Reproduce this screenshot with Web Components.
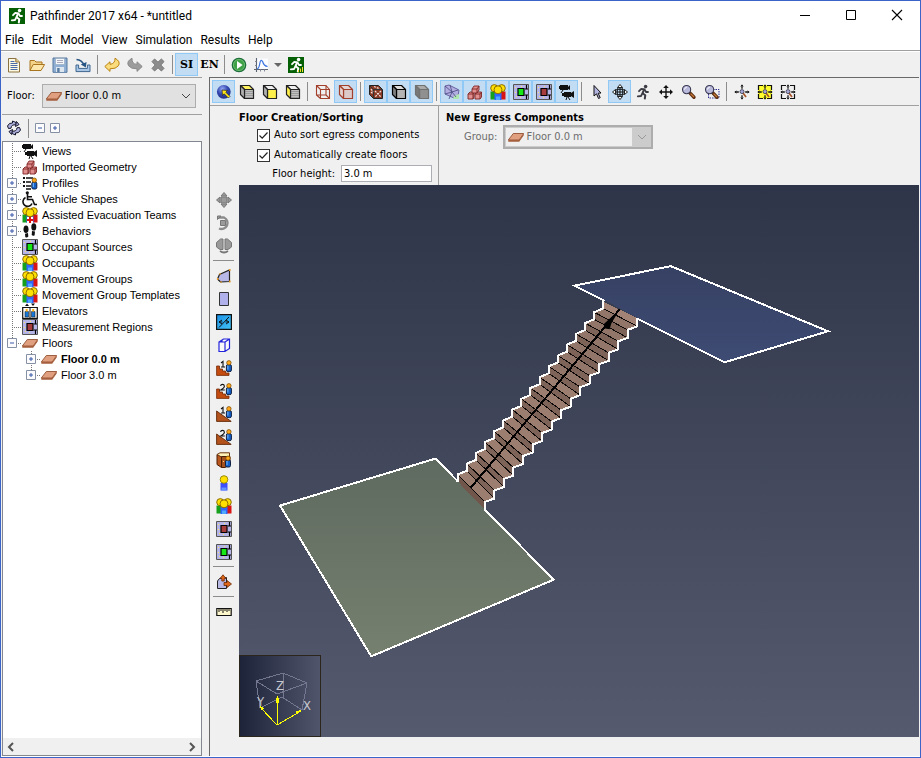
<!DOCTYPE html>
<html lang="en">
<head>
<meta charset="utf-8">
<title>Pathfinder 2017 x64 - *untitled</title>
<style>
html, body { margin: 0; height: 100%; }
body { font: 11px/16px "DejaVu Sans Condensed", "DejaVu Sans", sans-serif; color: #000; background: #fff; }
</style>
</head>
<body>
<pf-window></pf-window>

<script>
/* ---------- icon artwork, each on a 16 x 16 grid ---------- */
const runner = c => `<g fill="none" stroke="${c}" stroke-width="1.8" stroke-linejoin="round" stroke-linecap="round"><path d="M4 7.2L6.3 4.8L9.5 5.4L11 8H13"/><path d="M9 5.6L7.6 9.2L10.3 11.2L9.8 14.5" stroke-width="2"/><path d="M7.4 9.4L6 12L2.8 12.4"/></g><circle cx="10.6" cy="2.6" r="1.8" fill="${c}"/>`;
const small = (x, y) => `<rect x="${x}" y="${y + 4}" width="5" height="7" rx="1.5" fill="#1560c8" stroke="#102040"/><path d="M${x + 1.5} ${y + 5}v4" stroke="#7ac0ff"/><circle cx="${x + 2.5}" cy="${y + 2.2}" r="2.2" fill="#ffa818" stroke="#704000" stroke-width=".7"/>`;
const crowd = `<path d="M.5 7.500h4.500v8H.5z" fill="#16a01c"/><path d="M11 7.500h4.500v8H11z" fill="#d81414"/><path d="M4.500 9h7v7h-7z" fill="#2f66ff"/><path d="M6 12.500h4V16H6z" fill="#50a8ff"/><g fill="#ffe000" stroke="#806000" stroke-width=".9"><circle cx="4.300" cy="4.200" r="3.600"/><circle cx="11.700" cy="4.200" r="3.600"/><circle cx="8" cy="5.800" r="4"/></g>`;
const source = c => `<path d="M.5.5h15v15H.5z" fill="#b4b4e6" stroke="#555"/><path d="M5 4.500h6v7H5z" fill="${c}" stroke="#000" stroke-width="1.2"/><path d="M13.5 1v4M12 5h3M13.5 15v-4M12 11h3" stroke="#000" stroke-width="1.2"/><path d="M2 3h1v1H2zM2 8h1v1H2zM3 12h1v1H3zM7 13h1v1H7zM8 2h1v1H8z" fill="#ffe860"/>`;
const slab = `<path d="M.3 11L5.3 4.5H15.7L11.2 11z" fill="#e0a080" stroke="#935334" stroke-width=".9"/><path d="M.3 11V12.800H11.2L15.700 6.400V4.500L11.2 11z" fill="#a65f3c"/>`;
const hatch = `<path d="M6.500 7.500h7M6.500 9.500h7M6.500 11.500h7M6.500 13.500h7" stroke="#777" stroke-dasharray="1 1" stroke-width="1"/>`;
const box = (top, front, side, s = '#222', over = '') => `<g stroke="${s}" stroke-width="1.2" stroke-linejoin="round"><path d="M1.500 1.500H10.500L14.500 5.500H5.500z" fill="${top}"/><path d="M5.5 5.500H14.500V14.5H5.5z" fill="${front}"/><path d="M1.500 1.500L5.5 5.500V14.5L1.500 10.500z" fill="${side}"/></g>${over}`;
const cameras = `<g><path d="M1 1h8v5H1zM9 3l2-2v5L9 5zM0 2h2v3H0zM5 8h7v5H5zM12 9l3-2v7l-3-2zM3 9h3v3H3z" fill="#111"/><path d="M4 6l-2 3M8 13l-1 3M9 13l2 3" stroke="#111" fill="none"/></g>`;
const lens = `<path d="M8.6 8.6L13 13.2" stroke="#5b2e12" stroke-width="3.4" stroke-linecap="round"/><path d="M9.6 9.6L13 13" stroke="#c87838" stroke-width="1.3"/><circle cx="5.6" cy="5.6" r="4.1" fill="#b9b9dc" stroke="#383850" stroke-width="1.1"/><path d="M3.5 5.5q.3-2 2.3-2.3" stroke="#fff" fill="none"/>`;
const fit = `<path d="M8 .8v4M8 11.2v4M.8 8h4M11.2 8h4" stroke="#111" stroke-width="1.3"/><path d="M6.8 2.4L8 1l1.2 1.4M6.8 13.6L8 15l1.2-1.4M2.4 6.8L1 8l1.4 1.2M13.6 6.8L15 8l-1.4 1.2" fill="none" stroke="#111" stroke-width=".8"/><path d="M9 9L12 13" stroke="#a8542a" stroke-width="1.7"/><circle cx="8" cy="7.6" r="2" fill="#a8a8d8" stroke="#334" stroke-width=".8"/>`;
const corners = `<path d="M6 1.500H1.500V6M10 1.500H14.500V6M14.500 10V14.500H10M6 14.500H1.500V10" fill="none" stroke="#111" stroke-width="1.2"/>`;
const move = c => `<path d="M8 2v12M2 8h12" stroke="${c}" stroke-width="1.4"/><path d="M5.2 4L8 1l2.8 3zM5.2 12L8 15l2.8-3zM4 5.2L1 8l3 2.8zM12 5.2L15 8l-3 2.8z" fill="${c}"/>`;
const digit = n => n === 1 ? `<path d="M5 3L7 1.4V7M5 7h4" fill="none" stroke="#111" stroke-width="1.1"/>` : `<path d="M4.6 3Q4.8 1.4 6.5 1.4T8.4 3.2Q8.4 4.6 4.8 7H8.8" fill="none" stroke="#111" stroke-width="1.1"/>`;
const stair = n => `<path d="M.6 6V15.4H13V13H9.500V11H6.500V9H3.500V6z" fill="#c44c10" stroke="#732a06" stroke-width=".8"/>` + digit(n) + small(10.4, .6);
const ramp = n => `<path d="M.6 5V15.4H15.2z" fill="#b4521c" stroke="#602808" stroke-width=".9"/>` + digit(n) + small(10.4, .6);

const ICONS = {
  app: `<path d="M0 0h16v16H0z" fill="#055f05"/>` + runner('#fff'),
  results: `<path d="M0 0h16v16H0z" fill="#055f05"/>` + runner('#fff') + `<path d="M10.5 15v-2M12.5 15v-3.4M14.5 15v-5" stroke="#f4dc28" stroke-width="1"/>`,
  new: `<path d="M2.5 1.5H9.8L13.5 5V15H2.5z" fill="#fff8e0" stroke="#8a7340"/><path d="M9.8 1.5V5h3.7" fill="#e9cf8c" stroke="#8a7340"/><path d="M4.5 4.5h4M4.5 6.5h7M4.5 8.5h7M4.5 10.5h7M4.5 12.5h7" stroke="#4a6ca8"/>`,
  open: `<path d="M1 13.5V3.5h4.5L7 5h6v3" fill="#f3d38a" stroke="#a9741e"/><path d="M1 13.5L4.2 7.5H15.6L12 13.5z" fill="#fde6ac" stroke="#a9741e" stroke-linejoin="round"/>`,
  save: `<path d="M1 1h14v14.3H1z" fill="#8fb0d4" stroke="#56799f"/><path d="M3.5 1.5h9v6h-9z" fill="#f4f7fa" stroke="#90a5bb" stroke-width=".6"/><path d="M5 3.5h6M5 5.5h6" stroke="#aab"/><path d="M4 10h8v5H4z" fill="#dde5ee"/><path d="M5.2 11h2.4v4H5.2z" fill="#567a9f"/>`,
  import: `<path d="M1 8V14.6H15V8H12.4V11.4H3.6V8z" fill="#a9c6e6" stroke="#3e668f" stroke-width="1"/><path d="M1.5 2.5Q7 3 9.2 8.4" fill="none" stroke="#285684" stroke-width="1.6"/><path d="M5.8 7.6L10.8 10.4L11.6 5z" fill="#285684"/>`,
  undo: `<path d="M.8 9.5L6 4.800V7.400Q11.400 6.500 11 1.200Q17 4.600 14.400 8.800Q12 12 6 11.800V14.400z" fill="#fbdc7c" stroke="#b98314" stroke-linejoin="round"/>`,
  redo: `<path d="M15.2 9.5L10 4.8V7.4Q4.6 7 5 1.2Q-1 4.6 1.6 8.8Q4 12 10 11.8V14.4z" fill="#9c9c9c" stroke="#8a8a8a" stroke-linejoin="round"/>`,
  delete: `<path d="M2 4.6L4.6 2L8 5.2L11.4 2L14 4.6L10.8 8L14 11.4L11.4 14L8 10.8L4.6 14L2 11.4L5.2 8z" fill="#8c8c8c" stroke="#777"/>`,
  run: `<circle cx="8" cy="8" r="6.7" fill="#3fa146" stroke="#1d6d3c" stroke-width="1.3"/><circle cx="8" cy="8" r="5.6" fill="none" stroke="#8ad08a" stroke-width=".6"/><path d="M6 4L11.6 8L6 12z" fill="#fff"/>`,
  chart: `<path d="M3.5 1.5H15V12.5H3.5z" fill="#fafcff"/><path d="M3.5 1V15M1 12.5H15" stroke="#5b6470" stroke-width="1.1"/><path d="M2 4.5h1.5M2 8.500h1.500M7.500 12.500v2M11.500 12.500v2" stroke="#889"/><path d="M4 12Q6 11.500 6.800 6.500T9.600 4.500Q10.800 9 14.600 9.500" fill="none" stroke="#3c74e0" stroke-width="1.2"/>`,
  caret: `<path d="M4 6h8L8 10z" fill="#666"/>`,
  refresh: `<g fill="#aeb0dc" stroke="#15152c" stroke-width="1"><path d="M6.500 1L10 2.500V5Q5.500 4 5 8.200L2.500 8.500L1.500 6Q3 2.500 6.500 3z"/><path d="M9.500 15L6 13.500V11Q10.500 12 11 7.800L13.500 7.500L14.500 10Q13 13.500 9.500 13z"/><path d="M10.500 1.500L13 4.500L9.500 6.500zM5.500 14.500L3 11.500L6.500 9.500z"/></g>`,
  sphere: `<defs><radialGradient id="g" cx=".4" cy=".3" r=".75"><stop offset="0" stop-color="#95a8f4"/><stop offset=".5" stop-color="#3448b0"/><stop offset="1" stop-color="#1d2b80"/></radialGradient></defs><circle cx="7.800" cy="7.800" r="6.900" fill="url(#g)"/><path d="M6 6L11.500 6.500L9.800 8.200L14 12.400L12.400 14L8.200 9.800L6.500 11.500z" fill="#ffe818" stroke="#222" stroke-width=".7"/>`,
  boxTop: box('#fff060', '#c0c0c0', '#b0b0b0', '#222', hatch), boxFront: box('#eee', '#fff04c', '#b0b0b0'), boxSide: box('#eee', '#c0c0c0', '#fff04c', '#222', hatch),
  wire: `<g fill="none" stroke="#a3402c" stroke-width="1.1"><path d="M1.500 1.500H11V11H1.500zM5.500 5.500H14.500V14.500H5.500zM1.500 1.500L5.500 5.500M11 1.500L14.500 5.500M1.500 11L5.500 14.500M11 11L14.500 14.500"/></g>`,
  wireSolid: box('#e4d4d4', '#dccaca', '#e4d4d4', '#a3402c'),
  textured: `<path d="M1.500 1.500H10.500L14.500 5.500V14.500H5.500L1.500 10.500z" fill="#8a3826" stroke="#222"/><path d="M5.500 5.500H14M5.500 5.500V14.500M1.500 1.500L5.500 5.500" stroke="#333"/><path d="M7 7l6 6M13 7l-6 6M3 5l2 3M6 2.500l5 2M3 8l2 2" stroke="#f0e0d8" stroke-width="1.300" stroke-dasharray="2 1"/>`,
  solidEdge: box('#ddd', '#b4b4b4', '#808080', '#000'), solid: box('#aaa', '#909090', '#787878', '#707070'),
  navmesh: `<path d="M1 2L5 1L15 6L14 12L10 14L1 10z" fill="#b2aee2" stroke="#6864a0"/><path d="M10 12L15 10V15H9z" fill="#aee8ae"/><path d="M1 2L8 8L14 6M8 8L5 15M8 8L1 10M8 8L12 13M6 1L8 8" stroke="#46467c" fill="none" stroke-width=".8"/>`,
  geometry: `<g fill="#e28f8f" stroke="#7e2424" stroke-width=".9"><path d="M1 10l2-2h4v5l-1 2H1zM1 10h5v5M6 10l1-2"/><path d="M8 10l2-2h4.500v5L13 15H8zM8 10h5v5M13 10l1.500-2"/><path d="M5 5l2-3h5v4l-2 3H5zM5 5h5v4M10 5l2-3"/></g>`,
  crowd, cameras, slab,
  source: source('#16e816'), region: source('#a63c3c'),
  pointer: `<path d="M5 1.500V12L7.500 9.800L9.500 14.500L11.200 13.700L9.200 9.200L12 9z" fill="#b4b4e0" stroke="#111"/>`,
  orbit: `<path d="M8 3v10M3 8h10" stroke="#111"/><ellipse cx="8" cy="8" rx="6" ry="2.800" fill="none" stroke="#111"/><ellipse cx="8" cy="8" rx="2.800" ry="6" fill="none" stroke="#111"/><path d="M5.500 3.500L8 .500l2.500 3zM5.500 12.500L8 15.500l2.500-3zM3.500 5.500L.500 8l3 2.500zM12.500 5.500L15.500 8l-3 2.500z" fill="#fff" stroke="#111" stroke-width=".9"/>`,
  walk: runner('#3c3c44'), pan: move('#111'),
  zoom: lens, zoomBox: `<path d="M6.500 5.500H15V14H4.500V7" fill="none" stroke="#2c2c90" stroke-dasharray="1.500 1"/>` + lens,
  fitAll: fit, fitSel: `<path d="M1 1h14v14H1z" fill="#ffff30"/>` + corners + fit, fitFloor: corners + fit,
  moveTool: `<g stroke="#777" fill="#9a9a9a"><path d="M5 5h6v6H5z"/><path d="M5 4L8 .5l3 3.500zM5 12L8 15.500l3-3.500zM4 5L.5 8l3.500 3zM12 5L15.500 8l-3.500 3z"/></g>`,
  rotateTool: `<g stroke="#777" fill="#9a9a9a"><path d="M4.500 5.500h5v5h-5z"/><path d="M2 2.500H8A5.500 5.500 0 1 1 3 13.500" fill="none" stroke="#8c8c8c" stroke-width="2.400"/><path d="M1.500 4.500V1H5z"/></g>`,
  mirrorTool: `<g stroke="#777" fill="#9a9a9a"><path d="M.5 4.500L4.500 1H7V11.500H4L.5 9zM15.500 4.500L11.500 1H9V11.500H12L15.500 9z"/><path d="M4 13Q8 16 12 13" fill="none" stroke-width="1.800"/></g>`,
  polygon: `<path d="M1.500 11L3.500 6.500L13.500 2V13.500L4.500 14z" fill="#b8b8e8" stroke="#222" stroke-width="1.200"/><path d="M1 11h1.500M13 2h1.500M3.500 6h1M13 13.500h1.500M4.500 14h1" stroke="#e89a20" stroke-width="2"/>`,
  rect: `<path d="M3.500 1.500h9v13h-9z" fill="#b0b0ea" stroke="#333"/>`,
  door: `<defs><linearGradient id="g" x2="1" y2="1"><stop offset="0" stop-color="#1a90e8"/><stop offset="1" stop-color="#44c4f4"/></linearGradient></defs><path d="M.600.600h14.800v14.800H.600z" fill="url(#g)" stroke="#111" stroke-width="1.200"/><path d="M13 3L3 13.500" stroke="#111"/><path d="M6 6L3 8l3 2M10 6l3 2-3 2M3 8h3.500M9.500 8H13" fill="none" stroke="#111"/>`,
  thickDoor: `<path d="M3 5L7.500 2H13.500V11.500L9 14.500H3zM3 5H9V14.500M9 5L13.500 2M6 5V3" fill="#fff" fill-opacity=".6" stroke="#2424dc" stroke-width="1.200"/>`,
  stair1: stair(1), stair2: stair(2), ramp1: ramp(1), ramp2: ramp(2),
  elevator: `<path d="M1 2.500L5.500 4.500V15.500L1 12.500z" fill="#b8561e" stroke="#4c1e04"/><path d="M1 2.500L4 .800H13.500V5H5.500z" fill="#fff2b8" stroke="#6a3410"/><path d="M5.500 4.500H14V12.500L9 15.500H5.500z" fill="#a4501c" stroke="#4c1e04"/><path d="M7 9.500h1" stroke="#ffd080"/>` + small(9.500, 4),
  occupant: `<path d="M4.500 8h7v7.500h-7z" fill="#3c50ff"/><path d="M5.500 12.500h5v3h-5z" fill="#6494ff"/><circle cx="8" cy="4.500" r="3.800" fill="#ffe000" stroke="#908000" stroke-width=".9"/>`,
  portal: `<path d="M1.500 14.500V7Q3 3.500 7 3.500H10.500V14.500z" fill="#b8b8e4" stroke="#222"/><path d="M4 4.500L7 .800L10 4.500H8.200V7H5.800V4.500zM11 6.500L15.500 10L11 13.500V11.500H8V8.500H11z" fill="#e0681c" stroke="#6c2804" stroke-width=".8"/>`,
  ruler: `<path d="M.800 4.500H15.200V11.500H.800z" fill="#fff8cc" stroke="#111" stroke-width="1.200"/><path d="M3 5v3M5 5v2M7 5v4M9 5v2M11 5v3M13 5v2" stroke="#111"/>`,
  profiles: `<path d="M1 3h2M1 7h2M1 11h2" stroke="#111" stroke-width="2"/><path d="M4 3h7M4 7h5M4 11h5M4 14h5" stroke="#111" stroke-width="1.300"/>` + small(9.800, 3),
  wheelchair: `<g fill="none" stroke="#111" stroke-width="1.600"><path d="M5.500 3V8.500H10.500L12.500 13.500H15"/><path d="M3.500 6.500A4.700 4.700 0 1 0 10 12.500M6 5.800h4"/></g><circle cx="5.300" cy="1.800" r="1.600" fill="#111"/>`,
  team: crowd + `<path d="M5 10h6v6H5z" fill="#fff"/><path d="M8 10v6M5 13h6" stroke="#e01010" stroke-width="2"/>`,
  feet: `<g fill="#111"><ellipse cx="4" cy="6.300" rx="2.500" ry="3.800"/><path d="M3 10.800l3-.700.300 3.500q-1.500 1.800-3 .300z"/><ellipse cx="11.800" cy="3.900" rx="2.500" ry="3.600"/><path d="M10 8l3 .600-.400 3.600q-1.600 1.200-2.900-.300z"/></g>`,
  lift: `<path d="M3 3L5 .500L7 3zM9 .500h4L11 3z" fill="#111"/><path d="M.7 4.500h14.600v10.800H.7z" fill="#fff" stroke="#111" stroke-width="1.200"/><path d="M8 4.500v10.500" stroke="#111"/><path d="M3 8.500h3.500v5.500H3zM9.500 8.500H13v5.500H9.500z" fill="#1878d8" stroke="#123" stroke-width=".600"/><path d="M3.700 6h2v2.500h-2zM10.200 6h2v2.500h-2z" fill="#ffb010"/>`,
  collapse: `<path d="M3.500 3.500h9v9h-9z" fill="#fcfcff" stroke="#8590a4"/><path d="M6 8h4" stroke="#3858a8"/>`,
  expand: `<path d="M3.500 3.500h9v9h-9z" fill="#fcfcff" stroke="#8590a4"/><path d="M6 8h4M8 6v4" stroke="#3858a8"/>`,
  chevron: `<path d="M4 6L8 10L12 6" fill="none" stroke="currentColor"/>`,
  left: `<path d="M10 4L6 8L10 12" fill="none" stroke="#555" stroke-width="2"/>`,
  right: `<path d="M6 4L10 8L6 12" fill="none" stroke="#555" stroke-width="2"/>`,
  minimize: `<path d="M3 7.500h10" stroke="#000"/>`, maximize: `<path d="M3.500 2.500h9v9h-9z" fill="none" stroke="#000"/>`,
  close: `<path d="M3 2L13 12M13 2L3 12" stroke="#000" stroke-width="1.100"/>`
};

/* Attaches an open shadow root filled with styles and markup. */
class PfElement extends HTMLElement {
  connectedCallback() {
    if (this.shadowRoot) return;
    const t = document.createElement('template');
    t.innerHTML = `<style>*{box-sizing:border-box}${this.css()}</style>${this.html()}`;
    this.attachShadow({ mode: 'open' }).append(t.content.cloneNode(true));
  }
  attr(n, d = '') { return this.getAttribute(n) ?? d; }
}

class PfIcon extends PfElement {
  css() { return `:host{display:block;width:16px;height:16px;flex:none}svg{display:block;width:100%;height:100%}`; }
  html() { return `<svg viewBox="0 0 16 16" aria-hidden="true">${ICONS[this.attr('name')]}</svg>`; }
}

class PfTool extends PfElement {
  css() {
    return `:host{display:block;flex:none;width:23px;height:23px}
    :host([medium]){width:21px}
    :host([narrow]){width:13px}
    button{display:grid;place-content:center;width:100%;height:100%;padding:0;border:1px solid transparent;background:none;overflow:hidden;
      font:bold 11px/16px "DejaVu Serif","Liberation Serif",serif;color:#000}
    button[aria-pressed=true]{background:#c1dcf3;border-color:#90c8f6}`;
  }
  html() {
    return `<button type="button" aria-label="${this.attr('label')}" aria-pressed="${this.hasAttribute('on')}">${this.hasAttribute('icon') ? `<pf-icon name="${this.attr('icon')}"></pf-icon>` : '<slot></slot>'}</button>`;
  }
}

class PfSep extends PfElement {
  css() {
    return `:host{display:grid;place-items:center;flex:none;width:7px;height:21px}
    :host([slim]){width:6px}
    i{width:1px;height:19px;background:#8c8c8c}
    :host([flat]){width:23px;height:7px}:host([flat]) i{width:21px;height:1px}`;
  }
  html() { return `<i></i>`; }
}

/* A strip of tools. items: "icon", "icon*" when pressed, "|" for a separator. */
class PfToolbar extends PfElement {
  css() {
    return `:host{display:block}div{display:flex;align-items:center}
    :host([vertical]) div{flex-direction:column;align-items:flex-start}`;
  }
  html() {
    const v = this.hasAttribute('vertical') ? ' flat' : this.hasAttribute('slim') ? ' slim' : '';
    const items = this.attr('items').split(' ').filter(Boolean).map(n => n === '|' ? `<pf-sep${v}></pf-sep>` :
      `<pf-tool icon="${n.replace('*', '')}" label="${n.replace('*', '')}"${n.endsWith('*') ? ' on' : ''}></pf-tool>`).join('');
    return `<div role="toolbar">${items}</div>`;
  }
}

class PfTitlebar extends PfElement {
  css() {
    return `:host{display:flex;align-items:center;gap:5px;height:30px;padding-left:8px;font:12px/16px Roboto,sans-serif;background:#fff}
    h1{flex:1;margin:0;font:inherit}nav{display:flex}
    button{width:46px;height:28px;display:grid;place-items:center;border:0;background:none;padding:0}`;
  }
  html() {
    return `<pf-icon name="app"></pf-icon><h1><slot></slot></h1><nav>${['minimize', 'maximize', 'close'].map(n => `<button type="button" aria-label="${n}"><pf-icon name="${n}"></pf-icon></button>`).join('')}</nav>`;
  }
}

class PfMenubar extends PfElement {
  css() {
    return `:host{display:block;background:#fff;border-bottom:1px solid #a0a0a0}
    nav{display:flex;height:19px;padding-left:4px;gap:8px}
    button{border:0;padding:0;background:none;font:12px/19px Roboto,sans-serif;color:#000}`;
  }
  html() { return `<nav>${this.attr('items').split(',').map(n => `<button type="button">${n}</button>`).join('')}</nav>`; }
}

class PfSelect extends PfElement {
  css() {
    return `:host{display:block;color:#000}
    div{display:grid;grid-template-columns:22px 1fr 19px;align-items:center;height:24px;border:1px solid #adadad;background:#e1e1e1}
    :host([disabled]) div{border:2px solid #adadad;background:#ccc;color:#6d6d6d}
    select{grid-area:1/1/2/4;appearance:none;width:100%;height:100%;border:0;padding:0 18px 0 22px;font:11px/16px "DejaVu Sans Condensed",sans-serif;color:inherit;background:none;opacity:1}
    :host([disabled]) select{background:linear-gradient(#efefef,#efefef) 1px 1px/calc(100% - 20px) calc(100% - 2px) no-repeat;padding-left:21px}
    pf-icon{grid-row:1;pointer-events:none;justify-self:center}.a{grid-column:1;z-index:1}.b{grid-column:3;color:#444}
    :host([disabled]) .b{color:#999}`;
  }
  html() {
    return `<div><select aria-label="${this.attr('label')}"${this.hasAttribute('disabled') ? ' disabled' : ''}><option>${this.attr('value')}</option></select><pf-icon class="a" name="slab"></pf-icon><pf-icon class="b" name="chevron"></pf-icon></div>`;
  }
}

class PfCheck extends PfElement {
  css() {
    return `:host{display:block}label{display:flex;align-items:center;gap:4px;height:20px}
    input{appearance:none;flex:none;width:13px;height:13px;margin:0;border:1px solid #333;background:#fff}
    input:checked{background:#fff url("data:image/svg+xml,%3Csvg xmlns='http://www.w3.org/2000/svg' viewBox='0 0 11 11'%3E%3Cpath d='M1.500 5.500L4.200 8.200L9.500 2.500' fill='none' stroke='%23222' stroke-width='1.200'/%3E%3C/svg%3E")}`;
  }
  html() { return `<label><input type="checkbox" checked><span><slot></slot></span></label>`; }
}

class PfProps extends PfElement {
  css() {
    return `:host{display:grid;grid-template-columns:229px 1fr;height:80px;border-top:1px solid #a0a0a0}
    section{padding:4px 6px 0 29px;border-right:1px solid #a0a0a0}
    section+section{padding-left:7px;border:0}
    h2{margin:0;font:bold 11px/15px "DejaVu Sans Condensed",sans-serif}
    pf-check{margin-left:18px}
    .row{display:flex;align-items:center}
    .height{justify-content:flex-end;gap:6px}
    input{width:91px;height:17px;border:1px solid #adadb4;padding:0 2px;font:11px/15px "DejaVu Sans Condensed",sans-serif;background:#fff}
    .group{gap:6px;margin-left:18px;color:#6d6d6d}pf-select{width:150px}`;
  }
  html() {
    return `<section><h2>Floor Creation/Sorting</h2><pf-check>Auto sort egress components</pf-check><pf-check>Automatically create floors</pf-check>
    <div class="row height"><label for="h">Floor height:</label><input id="h" value="3.0 m"></div></section>
    <section><h2>New Egress Components</h2><div class="row group"><span>Group:</span><pf-select disabled label="Group" value="Floor 0.0 m"></pf-select></div></section>`;
  }
}

class PfNode extends PfElement {
  css() {
    return `:host{display:block;font:11px/16px "Liberation Sans",Arial,sans-serif}
    .row{display:grid;grid-template-columns:16px 2px auto;align-items:center;height:16px;width:max-content}
    .row pf-icon{margin-right:4px}.leaf{display:flex;align-items:center}
    .knob{width:16px;height:16px;padding:0;border:0;display:block;background:repeating-linear-gradient(90deg,#777 0 1px,transparent 1px 2px) 8px 8px/8px 1px no-repeat}
    .line{height:1px;background:repeating-linear-gradient(90deg,#777 0 1px,transparent 1px 2px)}
    b{font-weight:400;white-space:nowrap}:host([bold]) b{font-weight:700}
    .trunk{background:repeating-linear-gradient(#777 0 1px,transparent 1px 2px) 8px 0/1px 100% no-repeat}
    .trunk.end{background-size:1px 8px}
    .kids{margin-left:19px}`;
  }
  html() {
    const o = this.attr('open', null), end = this.hasAttribute('last') ? ' end' : '';
    const knob = o === null ? `<span class="knob"></span>` : `<button class="knob" type="button" aria-label="toggle"><pf-icon name="${o === 'true' ? 'collapse' : 'expand'}"></pf-icon></button>`;
    return `<div class="row" role="treeitem"><div class="trunk${end}">${knob}</div><i class="line"></i><div class="leaf"><pf-icon name="${this.attr('icon')}"></pf-icon><b>${this.attr('label')}</b></div></div><div class="kids"><slot></slot></div>`;
  }
}

class PfTree extends PfElement {
  css() {
    return `:host{display:flex;flex-direction:column;background:#fff;border:1px solid #828790;min-height:0}
    .body{flex:1;overflow:hidden;padding:1px 0 0 1px}
    .bar{display:flex;justify-content:space-between;height:17px;background:#f0f0f0}
    .bar button{width:17px;height:17px;padding:0;border:0;background:none}`;
  }
  html() {
    return `<div class="body" role="tree"><slot></slot></div><div class="bar"><button type="button" aria-label="Scroll left"><pf-icon name="left"></pf-icon></button><button type="button" aria-label="Scroll right"><pf-icon name="right"></pf-icon></button></div>`;
  }
}

class PfSidebar extends PfElement {
  css() {
    return `:host{display:flex;flex-direction:column;width:200px;flex:none;background:#f0f0f0}
    .floor{display:flex;align-items:center;gap:7px;height:37px;padding:0 6px 0 5px;border-top:1px solid #a0a0a0}
    pf-select{flex:1}
    .tools{display:flex;align-items:center;height:27px;border-top:1px solid #a0a0a0}
    .tools pf-sep~pf-tool{width:15px}
    pf-tree{flex:1}`;
  }
  html() {
    const n = (icon, label, extra = '', kids = '') => `<pf-node icon="${icon}" label="${label}" ${extra}>${kids}</pf-node>`;
    const c = 'open="false"';
    return `<div class="floor"><span>Floor:</span><pf-select label="Floor" value="Floor 0.0 m"></pf-select></div>
    <div class="tools"><pf-tool icon="refresh" label="Refresh"></pf-tool><pf-sep></pf-sep><pf-tool icon="collapse" label="Collapse all"></pf-tool><pf-tool icon="expand" label="Expand all"></pf-tool></div>
    <pf-tree>${n('cameras', 'Views')}${n('geometry', 'Imported Geometry')}${n('profiles', 'Profiles', c)}${n('wheelchair', 'Vehicle Shapes', c)}${n('team', 'Assisted Evacuation Teams', c)}${n('feet', 'Behaviors', c)}${n('source', 'Occupant Sources')}${n('crowd', 'Occupants')}${n('crowd', 'Movement Groups')}${n('crowd', 'Movement Group Templates')}${n('lift', 'Elevators')}${n('region', 'Measurement Regions')}${n('slab', 'Floors', 'open="true" last', n('slab', 'Floor 0.0 m', c + ' bold') + n('slab', 'Floor 3.0 m', c + ' last'))}</pf-tree>`;
  }
}

/* 3D view: two floors joined by a stair, with the axis gizmo in the corner. */
class PfViewport extends PfElement {
  css() {
    return `:host{display:block;position:relative;background:linear-gradient(#2f3548,#555a6e);overflow:hidden;min-width:0}
    svg{display:block}.scene{width:100%;height:100%}
    .axes{position:absolute;left:0;bottom:0;width:82px;height:82px;border:1px solid #2a261c;background:linear-gradient(90deg,#1d2338,#50556b)}
    text{font:13px "DejaVu Sans Condensed",sans-serif;fill:#c8c8d0}`;
  }
  stair() {
    const N = 17, p = (x, y) => `${x.toFixed(1)},${y.toFixed(1)}`;
    const L = i => [218.300 + 9.080 * i, 296 - 10.800 * i], R = i => [245.500 + 9.500 * i, 324.300 - 11.450 * i];
    let faces = '', lines = '', left = [], right = [];
    for (let i = 0; i < N; i++) {
      const [lx, ly] = L(i), [rx, ry] = R(i), lt = ly - 7, rt = ry - 8;
      faces += `<path d="M${p(lx, ly)}L${p(lx, lt)}L${p(rx, rt)}L${p(rx, ry)}z" fill="${i ? '#7e6458' : '#71564b'}"/>`;
      left.push(p(lx, ly), p(lx, lt)); right.push(p(rx, ry), p(rx, rt));
      if (i < N - 1) {
        const [nx, ny] = L(i + 1), [mx, my] = R(i + 1);
        faces += `<path d="M${p(lx, lt)}L${p(nx, ny)}L${p(mx, my)}L${p(rx, rt)}z" fill="${i > 9 ? '#92766a' : '#9c7e70'}"/>`;
        lines += `M${p(nx, ny)}L${p(mx, my)}`;
        lines += `M${p(lx, lt)}L${p(rx, rt)}`;
      } else faces += `<path d="M${p(lx, ly)}L${p(lx, lt)}L${p(rx, rt)}L${p(rx, ry)}z" fill="#a28375"/>`;
    }
    return `${faces}<path d="${lines}" stroke="#0c0808" stroke-width="1" fill="none"/>
      <path d="M${left.join('L')}M${right.join('L')}" fill="none" stroke="#fff" stroke-width="2"/>`;
  }
  html() {
    return `<svg class="scene" viewBox="0 0 680 551" preserveAspectRatio="xMinYMin slice" role="img" aria-label="3D model view">
    <defs><linearGradient id="g" x2="0" y2="1"><stop offset="0" stop-color="#5f6a60"/><stop offset="1" stop-color="#75806f"/></linearGradient>
    <linearGradient id="b" x2="0" y2="1"><stop offset="0" stop-color="#364163"/><stop offset="1" stop-color="#3e4b73"/></linearGradient></defs>
    <g shape-rendering="crispEdges">
    <path d="M41 320L196.500 273L218.500 296L245.500 324L314 394L132 470.500z" fill="url(#g)"/>
    <path d="M335 101L431 81L588 146L484.500 177L398 133L365 115z" fill="url(#b)"/>
    ${this.stair()}
    <path d="M218.500 296L196.500 273L41 320L132 470.500L314 394L245.500 324M365 115.500L335 100.500L431 81L588 146L484.500 177L398 133.500" fill="none" stroke="#fff" stroke-width="2"/>
    <path d="M231.500 302L380 124" stroke="#000" stroke-width="2"/></g>
    <path d="M380 124L371.500 138.500L370 144L364 143L364.500 138.500z" fill="#000"/></svg>
    <div class="axes"><svg viewBox="0 0 80 80" shape-rendering="crispEdges"><g fill="none" stroke="#73778f"><path d="M16 25L43 17L67 27L62 54M16 25L20 52L42 41L62 54M16 25L37 38L67 27M43 17V41"/></g>
    <path d="M37 69V40M37 69L20 51M37 69L61 55" stroke="#ffff00" stroke-width="1"/><path d="M35.500 42h3v5h-3zM20 50l4 2-2 3zM61 54l-5 1 1 3z" fill="#ffff00"/>
    <text x="36" y="34">Z</text><text x="17" y="50">Y</text><text x="63" y="54">X</text></svg></div>`;
  }
}

class PfWorkspace extends PfElement {
  css() {
    return `:host{display:flex;flex-direction:column;flex:1;min-width:0;border:solid #696969;border-width:1px 0 0 1px;background:#f0f0f0}
    .top{padding:2px 0 2px 2px;min-width:0}
    .main{flex:1;display:grid;grid-template-columns:29px 1fr;min-height:0;padding:0 0 19px}
    .side{padding:3px 0 0 2px}`;
  }
  html() {
    return `<pf-toolbar class="top" items="sphere* boxTop boxFront boxSide | wire wireSolid* | textured* solidEdge* solid* | navmesh* geometry* crowd* source* region* cameras* | pointer orbit* walk pan zoom zoomBox | fitAll fitSel fitFloor"></pf-toolbar>
    <pf-props></pf-props>
    <div class="main"><pf-toolbar class="side" vertical items="moveTool rotateTool mirrorTool | polygon rect door thickDoor stair1 stair2 ramp1 ramp2 elevator occupant crowd region source | portal | ruler"></pf-toolbar><pf-viewport></pf-viewport></div>`;
  }
}

class PfWindow extends PfElement {
  css() {
    return `:host{display:flex;flex-direction:column;box-sizing:border-box;height:100vh;border:1px solid #3c64c8;background:#fff}
    .tools{display:flex;align-items:center;height:26px;padding:0 0 0 1px;background:#f0f0f0;border-top:1px solid #fff}
    .panes{flex:1;display:flex;gap:7px;min-height:0;background:#f0f0f0;padding:0 1px 0;border-bottom:1px solid #fff}`;
  }
  html() {
    return `<pf-titlebar>Pathfinder 2017 x64 - *untitled</pf-titlebar>
    <pf-menubar items="File,Edit,Model,View,Simulation,Results,Help"></pf-menubar>
    <div class="tools"><pf-toolbar slim items="new open save import | undo redo delete |"></pf-toolbar><pf-tool on label="SI">SI</pf-tool><pf-tool label="EN">EN</pf-tool><pf-sep slim></pf-sep><pf-tool icon="run" label="Run"></pf-tool><pf-tool medium icon="chart" label="Chart"></pf-tool><pf-tool narrow icon="caret" label="More charts"></pf-tool><pf-tool icon="results" label="View results"></pf-tool></div>
    <div class="panes"><pf-sidebar></pf-sidebar><pf-workspace></pf-workspace></div>`;
  }
}

for (const [n, c] of Object.entries({ 'pf-icon': PfIcon, 'pf-tool': PfTool, 'pf-sep': PfSep, 'pf-toolbar': PfToolbar, 'pf-titlebar': PfTitlebar, 'pf-menubar': PfMenubar, 'pf-select': PfSelect, 'pf-check': PfCheck, 'pf-props': PfProps, 'pf-node': PfNode, 'pf-tree': PfTree, 'pf-sidebar': PfSidebar, 'pf-viewport': PfViewport, 'pf-workspace': PfWorkspace, 'pf-window': PfWindow })) customElements.define(n, c);
</script>
</body>
</html>
